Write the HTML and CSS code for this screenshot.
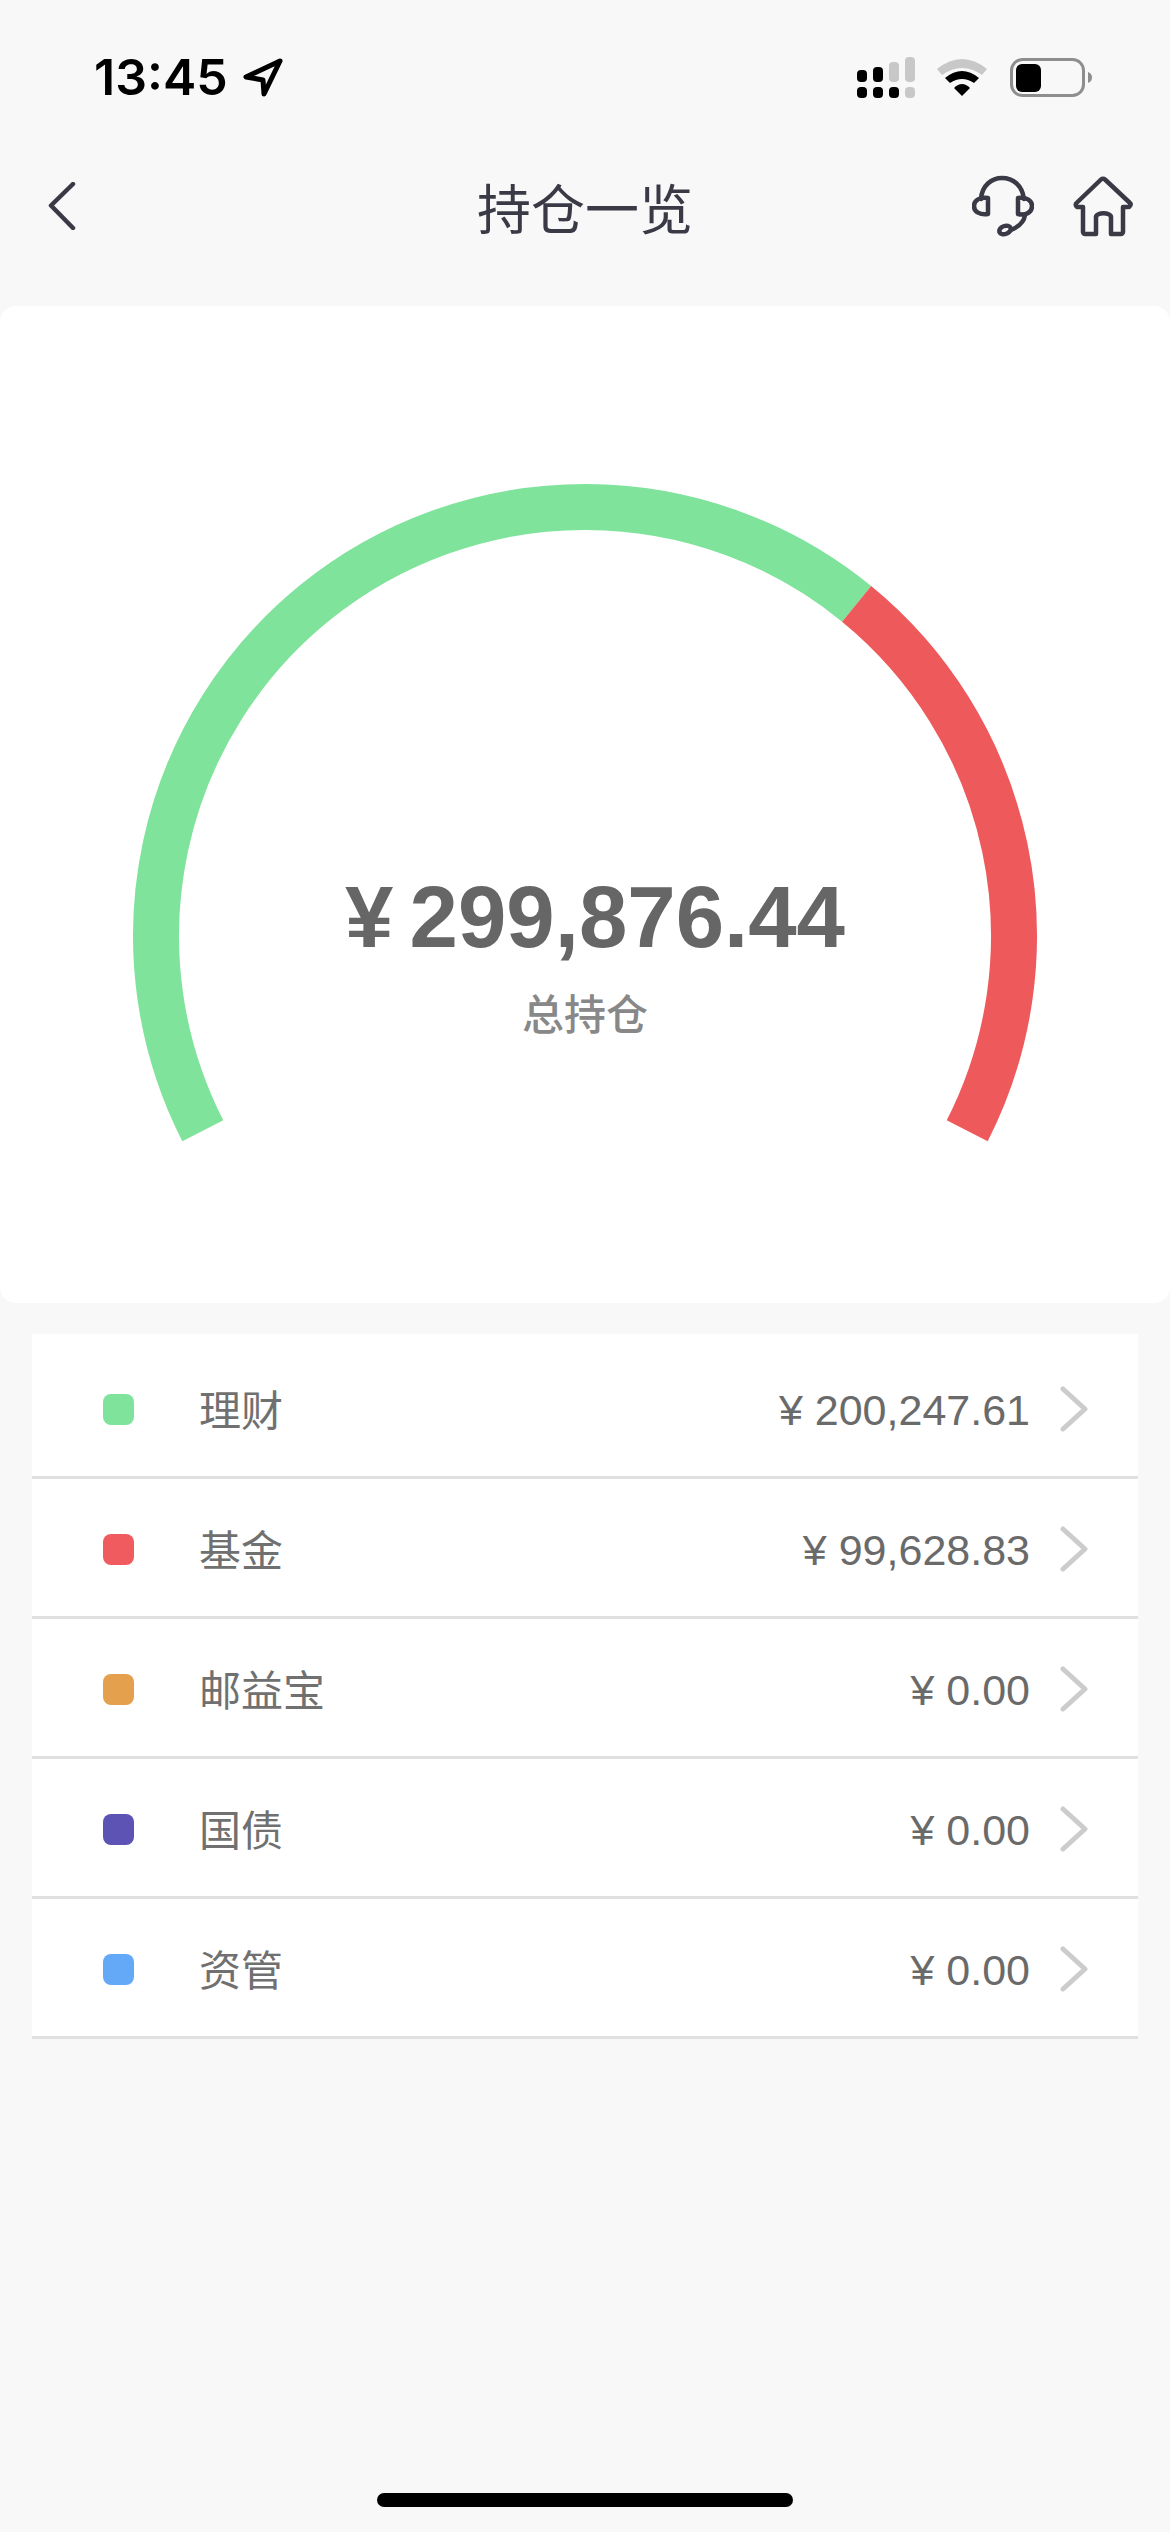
FILE: index.html
```html
<!DOCTYPE html>
<html lang="zh-CN">
  <head>
    <meta charset="UTF-8" />
    <title>持仓一览</title>
    <link rel="stylesheet" href="styles.css">
  </head>
  <body>
    <div class="status-bar">
      <div class="status-time">
        <span>13:45</span>
        <svg width="40" height="39" viewBox="0 0 40 39"><path d="M37 3L3 19L20 22L21 36Z" fill="none" stroke="#000" stroke-width="5" stroke-linejoin="round"/></svg>
      </div>
      <div class="status-icons">
        <svg width="58" height="41" viewBox="0 0 58 41">
          <g fill="#000">
            <rect x="0" y="13" width="10" height="12" rx="4"/>
            <rect x="16" y="10" width="10" height="15" rx="4"/>
            <rect x="0" y="30" width="10" height="11" rx="4"/>
            <rect x="16" y="30" width="10" height="11" rx="4"/>
            <rect x="32" y="30" width="10" height="11" rx="4"/>
          </g>
          <g fill="#c8c8c8">
            <rect x="32" y="5" width="10" height="20" rx="4"/>
            <rect x="48" y="0" width="10" height="25" rx="4"/>
            <rect x="48" y="30" width="10" height="11" rx="4"/>
          </g>
        </svg>
        <svg width="51" height="38" viewBox="0 0 51 38">
          <path d="M0 11Q25 -9 50 11L45 17Q25 3 5 17Z" fill="#c8c8c8"/>
          <path d="M8 20Q25 6 42 20L37 25Q25 17 13 25Z" fill="#000"/>
          <path d="M17 30Q25 22 33 30L25 38Z" fill="#000"/>
        </svg>
        <svg width="82" height="39" viewBox="0 0 82 39">
          <rect x="1.5" y="1.5" width="72" height="36" rx="11" fill="none" stroke="#8e8e8e" stroke-width="3"/>
          <rect x="6" y="6" width="25" height="28" rx="6" fill="#000"/>
          <path d="M78 14C81 15 82 17 82 19.500C82 22 81 24 78 25Z" fill="#8e8e8e"/>
        </svg>
      </div>
    </div>

    <div class="nav">
      <div class="nav-left">
        <svg width="28" height="48" viewBox="0 0 28 48"><path d="M25 2L3 23.500L25 46" fill="none" stroke="#3a3a46" stroke-width="4.500" stroke-linecap="round" stroke-linejoin="round"/></svg>
      </div>
      <div class="nav-title">持仓一览</div>
      <div class="nav-right">
        <svg width="62" height="62" viewBox="0 0 62 62" fill="none" stroke="#3a3a46" stroke-width="4.500" stroke-linecap="round" stroke-linejoin="round">
          <path d="M9 24C10 10 20 3 30 3C41 3 50 10 52 24"/>
          <path d="M16 23C8 22 2 25 2 31C2 37 8 40 16 39Z"/>
          <path d="M46 23V39C54 41 60 37 60 31C60 25 54 22 46 23Z"/>
          <path d="M53 40C52 48 46 52 39 55"/>
          <ellipse cx="33" cy="55" rx="6" ry="4" transform="rotate(-20 33 55)"/>
        </svg>
        <svg width="61" height="61" viewBox="0 0 61 61" fill="none" stroke="#3a3a46" stroke-width="4.500" stroke-linecap="round" stroke-linejoin="round">
          <path d="M10 31H5C3 31 2 28 3.500 27L28 3.500C29 2.500 31 2.500 32 3.500L57 27C58.500 28 57 31 55 31H50V56C50 57 49 58 48 58H38V41C38 36 23 36 23 41V58H12C11 58 10 57 10 56Z"/>
        </svg>
      </div>
    </div>

    <div class="summary-card">
      <svg class="gauge" width="1170" height="997" viewBox="0 0 1170 997" fill="none" stroke-width="46">
        <path d="M202.800 824.800A429 429 0 0 1 856.600 297.900" stroke="#7fe39b"/>
        <path d="M856.600 297.900A429 429 0 0 1 967.200 824.800" stroke="#ee5a5c"/>
      </svg>
      <div class="summary-text">
        <div class="summary-amount">¥ 299,876.44</div>
        <div class="summary-label">总持仓</div>
      </div>
    </div>

    <div class="holdings">
      <div class="holding-row">
        <span class="dot dot-green"></span>
        <span class="holding-name">理财</span>
        <span class="holding-amount">¥ 200,247.61</span>
        <svg class="arrow" width="28" height="46" viewBox="0 0 28 46"><path d="M3 3L25 23L3 43" fill="none" stroke="#ccc" stroke-width="5" stroke-linecap="round" stroke-linejoin="round"/></svg>
      </div>
      <div class="holding-row">
        <span class="dot dot-red"></span>
        <span class="holding-name">基金</span>
        <span class="holding-amount">¥ 99,628.83</span>
        <svg class="arrow" width="28" height="46" viewBox="0 0 28 46"><path d="M3 3L25 23L3 43" fill="none" stroke="#ccc" stroke-width="5" stroke-linecap="round" stroke-linejoin="round"/></svg>
      </div>
      <div class="holding-row">
        <span class="dot dot-orange"></span>
        <span class="holding-name">邮益宝</span>
        <span class="holding-amount">¥ 0.00</span>
        <svg class="arrow" width="28" height="46" viewBox="0 0 28 46"><path d="M3 3L25 23L3 43" fill="none" stroke="#ccc" stroke-width="5" stroke-linecap="round" stroke-linejoin="round"/></svg>
      </div>
      <div class="holding-row">
        <span class="dot dot-purple"></span>
        <span class="holding-name">国债</span>
        <span class="holding-amount">¥ 0.00</span>
        <svg class="arrow" width="28" height="46" viewBox="0 0 28 46"><path d="M3 3L25 23L3 43" fill="none" stroke="#ccc" stroke-width="5" stroke-linecap="round" stroke-linejoin="round"/></svg>
      </div>
      <div class="holding-row">
        <span class="dot dot-blue"></span>
        <span class="holding-name">资管</span>
        <span class="holding-amount">¥ 0.00</span>
        <svg class="arrow" width="28" height="46" viewBox="0 0 28 46"><path d="M3 3L25 23L3 43" fill="none" stroke="#ccc" stroke-width="5" stroke-linecap="round" stroke-linejoin="round"/></svg>
      </div>
    </div>

    <div class="home-bar"></div>
  </body>
</html>
```

FILE: styles.css
```css
* {
  margin: 0;
  padding: 0;
  box-sizing: border-box;
}

body {
  width: 1170px;
  height: 2532px;
  display: flex;
  flex-direction: column;
  background: #f8f8f8;
  font-family: "Liberation Sans", "Noto Sans CJK SC", sans-serif;
  overflow: hidden;
}

.status-bar {
  height: 154px;
  display: flex;
  justify-content: space-between;
  align-items: center;
  padding: 0 78px 0 94px;
}

.status-time {
  display: flex;
  align-items: center;
  gap: 15px;
  font-family: Inter, sans-serif;
  font-size: 50px;
  font-weight: 600;
  color: #000;
}

.status-icons {
  display: flex;
  align-items: center;
  gap: 22px;
}

.nav {
  height: 104px;
  margin-bottom: 48px;
  display: grid;
  grid-template-columns: 1fr auto 1fr;
  align-items: center;
  padding: 0 36px;
}

.nav-left {
  display: flex;
  padding-left: 12px;
}

.nav-title {
  font-family: "Noto Sans CJK SC", sans-serif;
  font-size: 54px;
  color: #3a3a46;
}

.nav-right {
  display: flex;
  justify-content: flex-end;
  align-items: center;
  gap: 39px;
}

.summary-card {
  position: relative;
  height: 997px;
  background: #fff;
  border-radius: 16px;
}

.gauge {
  display: block;
}

.summary-text {
  position: absolute;
  top: 556px;
  left: 0;
  right: 0;
  text-align: center;
}

.summary-amount {
  padding-left: 20px;
  font-size: 87px;
  line-height: 110px;
  font-weight: 700;
  word-spacing: -8px;
  color: #666;
}

.summary-label {
  margin-top: 10px;
  font-family: "Noto Sans CJK SC", sans-serif;
  font-size: 42px;
  font-weight: 500;
  line-height: 60px;
  color: #888;
}

.holdings {
  margin: 31px 32px 0;
  padding-top: 5px;
  background: #fff;
}

.holding-row {
  height: 140px;
  display: flex;
  align-items: center;
  padding: 3px 50px 0 71px;
  border-bottom: 3px solid #e0e0e0;
}

.dot {
  width: 31px;
  height: 31px;
  border-radius: 8px;
  margin-right: 65px;
}

.dot-green { background: #7fe39b; }
.dot-red { background: #ef5b5e; }
.dot-orange { background: #e5a04e; }
.dot-purple { background: #5d53b5; }
.dot-blue { background: #64a9f8; }

.holding-name {
  flex: 1;
  margin-bottom: 3px;
  font-family: "Noto Sans CJK SC", sans-serif;
  font-size: 42px;
  color: #707070;
}

.holding-amount {
  margin-top: 3px;
  font-size: 43px;
  color: #6a6a6a;
}

.arrow {
  margin-left: 30px;
}

.home-bar {
  width: 416px;
  height: 14px;
  margin: auto auto 25px;
  border-radius: 7px;
  background: #000;
}
```
